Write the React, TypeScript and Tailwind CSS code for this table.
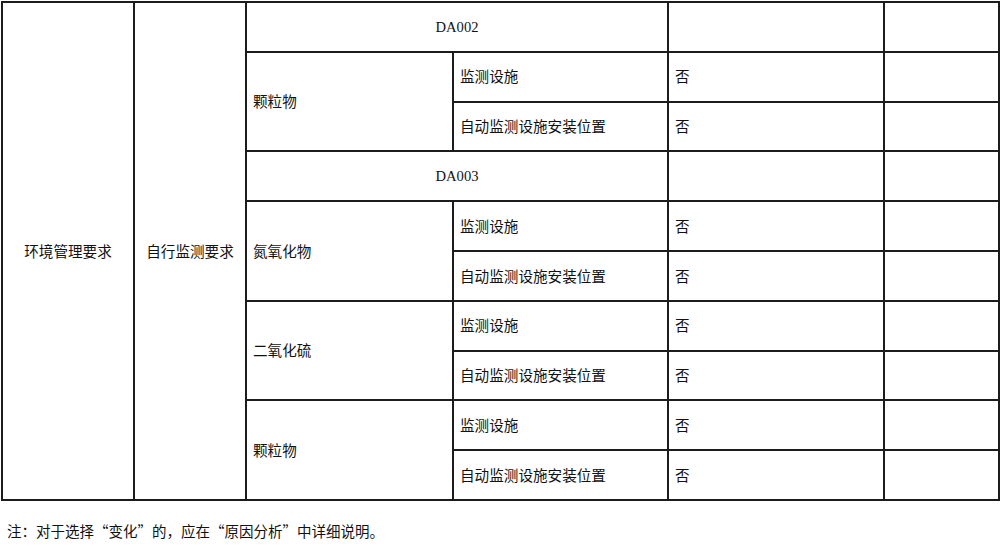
import React from "react";

const cjk = {
  fontFamily: '"Noto Sans CJK SC", "Liberation Serif", sans-serif',
};
const latin = {
  fontFamily: '"Liberation Serif", "Noto Sans CJK SC", serif',
};

const td = "border-2 border-[#1c1c1c] px-[6px] align-middle text-left";
const tdc = "border-2 border-[#1c1c1c] px-[6px] align-middle text-center";

function LQ() {
  return <span className="inline-block w-[14.5px] text-right">“</span>;
}
function P({ c }: { c: string }) {
  return <span className="inline-block w-[14.5px] text-left">{c}</span>;
}

export default function App() {
  const rowH = "h-[49.8px]";
  return (
    <div className="w-[1000px] h-[559px] bg-white text-[#111] text-[14.6px] leading-none" style={cjk}>
      <div className="pl-[1px] pt-[1px]">
        <table className="border-collapse w-[997px] table-fixed">
          <colgroup>
            <col className="w-[132px]" />
            <col className="w-[112px]" />
            <col className="w-[207px]" />
            <col className="w-[215px]" />
            <col className="w-[216px]" />
            <col className="w-[115px]" />
          </colgroup>
          <tbody>
            <tr className={rowH}>
              <td rowSpan={10} className={tdc}>环境管理要求</td>
              <td rowSpan={10} className={tdc}>自行监测要求</td>
              <td colSpan={2} className={tdc} style={latin}>DA002</td>
              <td className={td}></td>
              <td className={td}></td>
            </tr>
            <tr className={rowH}>
              <td rowSpan={2} className={td}>颗粒物</td>
              <td className={td}>监测设施</td>
              <td className={td}>否</td>
              <td className={td}></td>
            </tr>
            <tr className={rowH}>
              <td className={td}>自动监测设施安装位置</td>
              <td className={td}>否</td>
              <td className={td}></td>
            </tr>
            <tr className={rowH}>
              <td colSpan={2} className={tdc} style={latin}>DA003</td>
              <td className={td}></td>
              <td className={td}></td>
            </tr>
            <tr className={rowH}>
              <td rowSpan={2} className={td}>氮氧化物</td>
              <td className={td}>监测设施</td>
              <td className={td}>否</td>
              <td className={td}></td>
            </tr>
            <tr className={rowH}>
              <td className={td}>自动监测设施安装位置</td>
              <td className={td}>否</td>
              <td className={td}></td>
            </tr>
            <tr className={rowH}>
              <td rowSpan={2} className={td}>二氧化硫</td>
              <td className={td}>监测设施</td>
              <td className={td}>否</td>
              <td className={td}></td>
            </tr>
            <tr className={rowH}>
              <td className={td}>自动监测设施安装位置</td>
              <td className={td}>否</td>
              <td className={td}></td>
            </tr>
            <tr className={rowH}>
              <td rowSpan={2} className={td}>颗粒物</td>
              <td className={td}>监测设施</td>
              <td className={td}>否</td>
              <td className={td}></td>
            </tr>
            <tr className={rowH}>
              <td className={td}>自动监测设施安装位置</td>
              <td className={td}>否</td>
              <td className={td}></td>
            </tr>
          </tbody>
        </table>
        <p className="mt-[23px] pl-[6px] text-[14.5px]">
          注<P c="：" />对于选择<LQ />变化<P c="”" />的<P c="，" />应在<LQ />原因分析<P c="”" />中详细说明<P c="。" />
        </p>
      </div>
    </div>
  );
}
